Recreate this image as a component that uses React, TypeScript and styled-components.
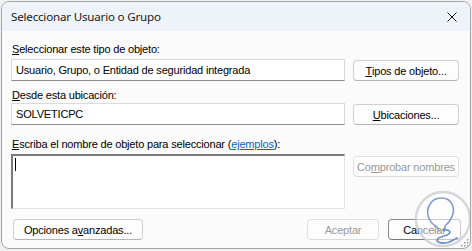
import styled, { createGlobalStyle } from "styled-components";

const GlobalStyle = createGlobalStyle`
  html, body {
    margin: 0;
    padding: 0;
    background: #f1f1f1;
  }
  body {
    width: 472px;
    height: 251px;
    overflow: hidden;
  }
`;

const Window = styled.div`
  position: relative;
  box-sizing: border-box;
  width: 470px;
  height: 248px;
  margin: 1px 0 0 1px;
  border: 1px solid #a3a3a3;
  border-radius: 8px;
  background: #fbfbfb;
  overflow: hidden;
  display: flex;
  flex-direction: column;
  font-family: "Liberation Sans", Arial, sans-serif;
  font-size: 11px;
  letter-spacing: -0.18px;
  color: #000;
`;

const TitleBar = styled.div`
  height: 29px;
  flex: none;
  background: #eef3fa;
  display: flex;
  align-items: center;
  justify-content: space-between;
  padding: 0 8px 0 9px;
`;

const Title = styled.span`
  font-family: "Noto Sans", "Open Sans", sans-serif;
  font-size: 11.6px;
  letter-spacing: -0.2px;
  color: #1a1a1a;
`;

const CloseIcon = styled.svg`
  width: 10px;
  height: 10px;
  margin-right: 5px;
`;

const Body = styled.div`
  display: flex;
  flex-direction: column;
  padding: 0 9px 0 9px;
`;

const Label = styled.div<{ $top: number }>`
  margin-top: ${(p) => p.$top}px;
  padding-left: 1px;
  line-height: 13px;
  white-space: nowrap;
`;

const Row = styled.div<{ $top: number }>`
  display: grid;
  grid-template-columns: 334px 106px;
  column-gap: 8px;
  align-items: start;
  margin-top: ${(p) => p.$top}px;
`;

const Field = styled.div`
  box-sizing: border-box;
  height: 22px;
  background: #fff;
  border: 1px solid #dadada;
  border-bottom-color: #8f8f8f;
  padding-left: 4px;
  display: flex;
  align-items: center;
  white-space: nowrap;
`;

const Button = styled.div<{ $disabled?: boolean; $focused?: boolean; $width?: number; $top?: number }>`
  box-sizing: border-box;
  height: 21px;
  width: ${(p) => (p.$width ? `${p.$width}px` : "auto")};
  margin-top: ${(p) => p.$top ?? 1}px;
  background: #fdfdfd;
  border: 1px solid ${(p) => (p.$focused ? "#8a8a8a" : p.$disabled ? "#e2e2e2" : "#cfcfcf")};
  border-bottom-color: ${(p) => (p.$focused ? "#7a7a7a" : p.$disabled ? "#dcdcdc" : "#b5b5b5")};
  border-radius: 4px;
  color: ${(p) => (p.$disabled ? "#9a9a9a" : "#000")};
  display: flex;
  align-items: center;
  justify-content: center;
  white-space: nowrap;
`;

const TextArea = styled.div`
  box-sizing: border-box;
  height: 55px;
  background: #fff;
  border-top: 2px solid #7a7a7a;
  border-left: 2px solid #7a7a7a;
  border-right: 1px solid #e3e3e3;
  border-bottom: 1px solid #e3e3e3;
  padding: 2px 0 0 2px;
`;

const Caret = styled.div`
  width: 1px;
  height: 13px;
  background: #000;
`;

const Link = styled.span`
  color: #0066cc;
  text-decoration: underline;
`;

const Footer = styled.div`
  display: flex;
  align-items: center;
  gap: 9px;
  margin-top: 9px;
  padding-left: 2px;
`;

const Spacer = styled.div`
  flex: 1;
`;

const Watermark = styled.svg`
  position: absolute;
  left: 408px;
  top: 183px;
  width: 62px;
  height: 66px;
  pointer-events: none;
`;

const Grip = styled.svg`
  position: absolute;
  right: 1px;
  bottom: 1px;
  width: 8px;
  height: 8px;
`;

export default function App() {
  return (
    <>
      <GlobalStyle />
      <Window>
        <TitleBar>
          <Title>Seleccionar Usuario o Grupo</Title>
          <CloseIcon viewBox="0 0 10 10">
            <path d="M0.5 0.5 L9.5 9.5 M9.5 0.5 L0.5 9.5" stroke="#1a1a1a" strokeWidth="1" />
          </CloseIcon>
        </TitleBar>
        <Body>
          <Label $top={12}>
            <u>S</u>eleccionar este tipo de objeto:
          </Label>
          <Row $top={3}>
            <Field>Usuario, Grupo, o Entidad de seguridad integrada</Field>
            <Button>
              <u>T</u>ipos de objeto...
            </Button>
          </Row>
          <Label $top={8}>
            <u>D</u>esde esta ubicación:
          </Label>
          <Row $top={1}>
            <Field>SOLVETICPC</Field>
            <Button>
              <u>U</u>bicaciones...
            </Button>
          </Row>
          <Label $top={13}>
            <u>E</u>scriba el nombre de objeto para seleccionar (<Link>ejemplos</Link>):
          </Label>
          <Row $top={3}>
            <TextArea>
              <Caret />
            </TextArea>
            <Button $disabled $top={2}>
              Co<u>m</u>probar nombres
            </Button>
          </Row>
          <Footer>
            <Button $width={130}>
              Opciones a<u>v</u>anzadas...
            </Button>
            <Spacer />
            <Button $disabled $width={72}>
              Aceptar
            </Button>
            <Button $focused $width={73}>
              Cancelar
            </Button>
          </Footer>
        </Body>
        <Watermark viewBox="410 185 62 66">
          <circle cx="443" cy="219" r="27" fill="rgba(255,255,255,0.55)" stroke="rgba(200,200,205,0.7)" strokeWidth="2.5" />
          <path
            d="M437 227 C428 222 425 212 430 204 C435 196 448 196 452 204 C456 212 451 221 445 226 L444 231 M437 227 L439 231"
            fill="none"
            stroke="#7f9dd0"
            strokeWidth="1.6"
            strokeLinecap="round"
          />
          <path
            d="M443 230 C452 229 452 234 444 236 C436 238 434 242 442 243 C450 244 452 240 457 238"
            fill="none"
            stroke="#6f8fca"
            strokeWidth="1.8"
            strokeLinecap="round"
          />
        </Watermark>
        <Grip viewBox="0 0 8 8">
          <rect x="6" y="0" width="1.5" height="1.5" fill="#9a9a9a" />
          <rect x="3" y="3" width="1.5" height="1.5" fill="#9a9a9a" />
          <rect x="6" y="3" width="1.5" height="1.5" fill="#9a9a9a" />
          <rect x="0" y="6" width="1.5" height="1.5" fill="#9a9a9a" />
          <rect x="3" y="6" width="1.5" height="1.5" fill="#9a9a9a" />
          <rect x="6" y="6" width="1.5" height="1.5" fill="#9a9a9a" />
        </Grip>
      </Window>
    </>
  );
}
